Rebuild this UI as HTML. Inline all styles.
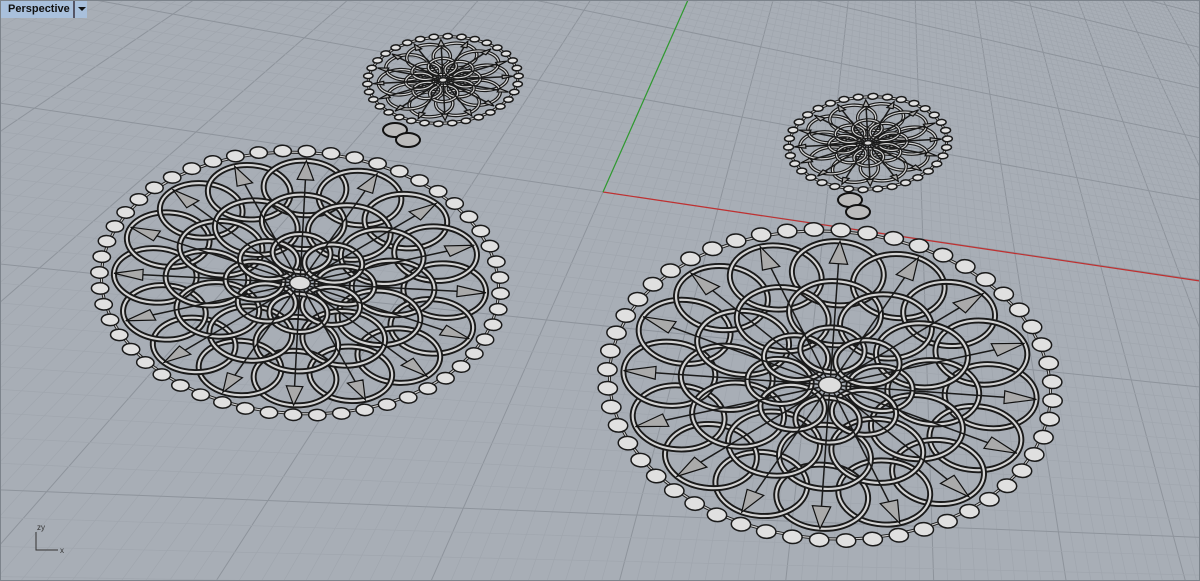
<!DOCTYPE html>
<html><head><meta charset="utf-8"><style>
html,body{margin:0;padding:0;width:1200px;height:581px;overflow:hidden;background:#a8aeb6;}
#v{position:absolute;left:0;top:0;}
.tab{position:absolute;left:1px;top:1px;height:17px;background:#a9c0dc;font:bold 11px "Liberation Sans",sans-serif;color:#111;line-height:17px;padding:0 0 0 7px;width:65px;white-space:nowrap;overflow:hidden;}
.dd{position:absolute;left:73px;top:1px;width:12px;height:17px;background:#a9c0dc;border-left:2px solid #556;}
.dd:after{content:"";position:absolute;left:3px;top:6px;border-left:4px solid transparent;border-right:4px solid transparent;border-top:4px solid #111;}
.frame{position:absolute;left:0;top:0;width:1198px;height:579px;border:1px solid #7d848c;}
</style></head><body>
<svg id="v" width="1200" height="581" xmlns="http://www.w3.org/2000/svg">
<g id="grid"></g>
<line x1="603" y1="192" x2="1200" y2="281" stroke="#c03030" stroke-width="1.2"/>
<line x1="603" y1="192" x2="688" y2="0" stroke="#2f9a2f" stroke-width="1.2"/>
<g id="art"></g>
<g stroke="#333" stroke-width="1" fill="none"><path d="M36 532 V550 H58"/></g>
<text x="37" y="530" font-family="Liberation Sans" font-size="8" fill="#333">zy</text>
<text x="60" y="553" font-family="Liberation Sans" font-size="8" fill="#333">x</text>
</svg>
<div class="tab">Perspective</div><div class="dd"></div><div class="frame"></div>
<script>
var NS="http://www.w3.org/2000/svg";
function el(p,n,a){var e=document.createElementNS(NS,n);for(var k in a)e.setAttribute(k,a[k]);p.appendChild(e);return e;}
var O=[603,192],VA=[3588,632],VB=[900,-480],a=0.004,b=0.016;
function P(u,v){var w=1+a*u+b*v;return [(u*a*VA[0]+v*b*VB[0]+O[0])/w,(u*a*VA[1]+v*b*VB[1]+O[1])/w,w];}
var g=document.getElementById('grid');
function seg(f,t0,t1,major){
 var pts=[];for(var i=0;i<=200;i++){var t=t0+(t1-t0)*i/200;var p=f(t);if(p[2]>0.02)pts.push(p);}
 if(pts.length<2)return;var A=pts[0],B=pts[pts.length-1];
 el(g,'line',{x1:A[0],y1:A[1],x2:B[0],y2:B[1],stroke:major?'#8e949c':'#a0a6ae','stroke-width':major?1:0.7});
}
for(var u=-240;u<=400;u++){(function(u){seg(function(v){return P(u,v)},-60,400,u%10==0);})(u);}
for(var v=-60;v<=400;v++){(function(v){seg(function(u){return P(u,v)},-240,2000,v%10==0);})(v);}
var art=document.getElementById('art');
function med(cx,cy,rx,ry,rot,small){
 var G=el(art,'g',{transform:'translate('+cx+','+cy+') rotate('+rot+') scale('+rx+','+ry+')'});
 function c(x,y,r,st,sw,fill){el(G,'circle',{cx:x,cy:y,r:r,fill:fill||'none',stroke:st,'stroke-width':sw,'vector-effect':'non-scaling-stroke'});}
 var rings=small?[[10,0.55,0.28],[8,0.3,0.18]]:[[16,0.7,0.2],[12,0.45,0.2],[8,0.22,0.14]];
 rings.forEach(function(R){for(var i=0;i<R[0];i++){var t=i/R[0]*Math.PI*2;var x=Math.cos(t)*R[1],y=Math.sin(t)*R[1];
  c(x,y,R[2],'#1a1a1a',small?3.5:6);c(x,y,R[2],'#d4d4d4',small?1.2:2.2);}});
 var n=16;for(var i=0;i<n;i++){var t=i/n*Math.PI*2,cs=Math.cos(t),sn=Math.sin(t);
  el(G,'line',{x1:0,y1:0,x2:cs*0.86,y2:sn*0.86,stroke:'#1a1a1a','stroke-width':1.5,'vector-effect':'non-scaling-stroke'});
  var r0=0.76,r1=0.9,w=0.04;
  el(G,'polygon',{points:(cs*r0-sn*w)+','+(sn*r0+cs*w)+' '+(cs*r1)+','+(sn*r1)+' '+(cs*r0+sn*w)+','+(sn*r0-cs*w),fill:'#aaa',stroke:'#111','stroke-width':1.2,'vector-effect':'non-scaling-stroke'});}
 c(0,0,0.05,'#222',1.5,'#ddd');
 c(0,0,0.96,'#1a1a1a',3);c(0,0,0.96,'#ccc',1.2);
 var nb=small?34:52;for(var i=0;i<nb;i++){var t=i/nb*Math.PI*2;c(Math.cos(t)*0.97,Math.sin(t)*0.97,small?0.06:0.042,'#1a1a1a',1.5,'#e0e0e0');}
}
med(300,283,207,136,3,false);
med(830,385,230,160,4,false);
med(443,80,78,45,-3,true);
med(868,143,82,48,-3,true);
[[395,130],[408,140],[850,200],[858,212]].forEach(function(p){el(art,'ellipse',{cx:p[0],cy:p[1],rx:12,ry:7,fill:'#bbb',stroke:'#111','stroke-width':2});});
</script>
</body></html>
